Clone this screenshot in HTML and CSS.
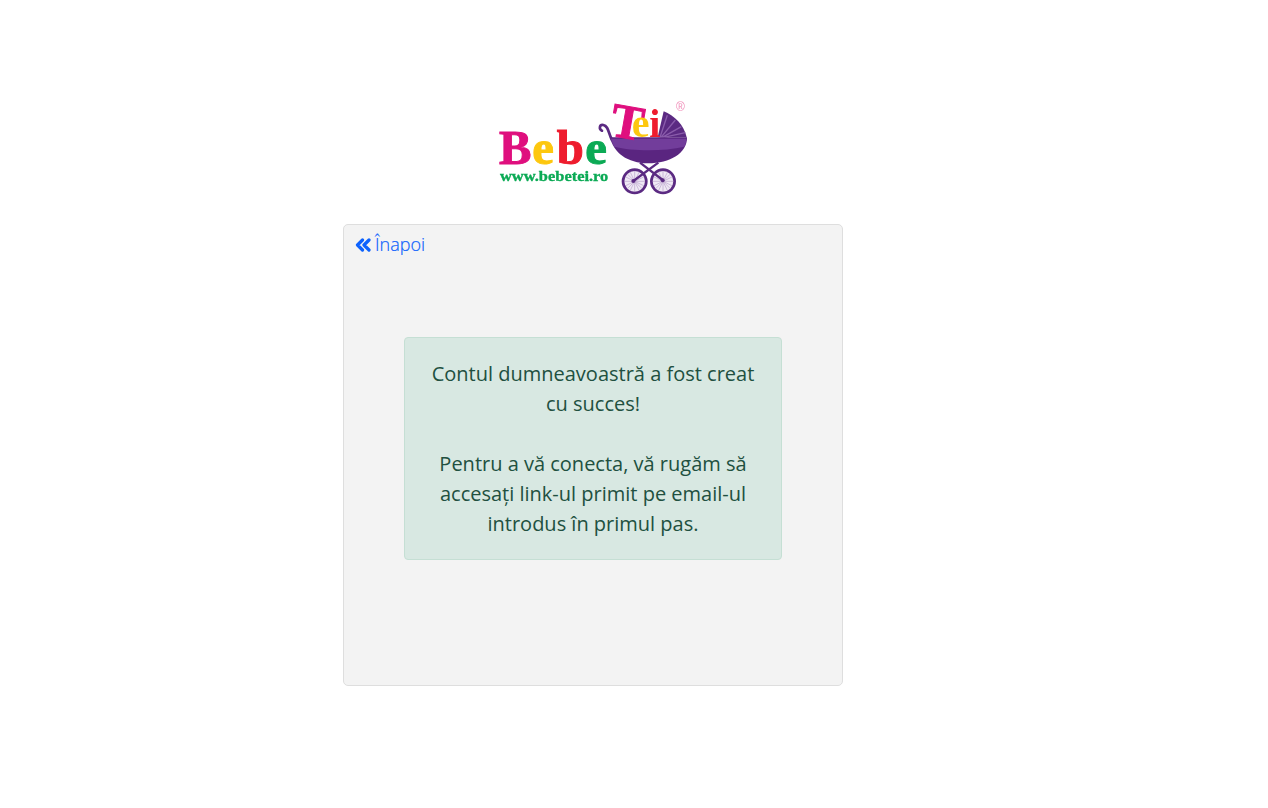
FILE: index.html
```html
<!DOCTYPE html>
<html lang="ro">
<head>
    <meta charset="UTF-8">
    <meta name="viewport" content="width=device-width, initial-scale=1.0">
    <link rel="stylesheet" href="styles.css">
    <title>Bebe Tei</title>
</head>
<body>
    <main class="page">
        <div class="logo">
            <svg class="logo-img" viewBox="-6 0 630 345" width="210" height="115" role="img" aria-label="Bebe Tei">
                <!-- wheels -->
                <circle cx="434" cy="274" r="35" fill="#efe9f4"/>
                <circle cx="519" cy="274" r="35" fill="#efe9f4"/>
                <g fill="none" stroke="#5b2a82">
                    <g stroke="#b9a2cc" stroke-width="2">
                        <path d="M434 242v64M402 274h64M412 252l44 44M456 252l-44 44M420 245l28 58M448 245l-28 58M405 260l58 28M463 260l-58 28"/>
                        <path d="M519 242v64M487 274h64M497 252l44 44M541 252l-44 44M505 245l28 58M533 245l-28 58M490 260l58 28M548 260l-58 28"/>
                    </g>
                    <circle cx="434" cy="274" r="35" stroke-width="8"/>
                    <circle cx="519" cy="274" r="35" stroke-width="8"/>
                    <path d="M450 218l68 52M505 218l-75 55" stroke-width="7"/>
                </g>
                <circle cx="430" cy="273" r="6" fill="#5b2a82"/>
                <circle cx="518" cy="271" r="6" fill="#5b2a82"/>
                <!-- hood -->
                <path d="M503 142L521 64C552 76 582 104 590 142Z" fill="#5b2a82"/>
                <path d="M510 142L532 76M513 142L556 90M517 142L574 110M521 142L586 128" stroke="#8a5cab" stroke-width="4" fill="none"/>
                <!-- handle -->
                <path d="M366 150C355 130 356 108 340 105C328 103 326 118 336 122" fill="none" stroke="#5b2a82" stroke-width="8" stroke-linecap="round"/>
                <!-- bowl -->
                <path d="M360 142H591C592 190 540 220 474 220C412 220 370 188 360 142Z" fill="#5a2580"/>
                <path d="M363 146H589C589 155 587 162 583 170C520 184 430 184 373 170C368 160 365 152 363 146Z" fill="#723d9b"/>
                <!-- lettering -->
                <text class="tei" transform="translate(356 136) rotate(10)" fill="#df0f7e" stroke="#df0f7e">T</text>
                <text class="tei-small" x="425" y="140" fill="#fdc70f">e</text>
                <text class="tei-small" x="478" y="140" fill="#ee1c2e">i</text>
                <text class="bebe" x="27" y="222" fill="#df0f7e" stroke="#df0f7e">B</text>
                <text class="bebe" x="127" y="222" fill="#fdc70f" stroke="#fdc70f">e</text>
                <text class="bebe" x="200" y="222" fill="#ee1c2e" stroke="#ee1c2e">b</text>
                <text class="bebe" x="286" y="222" fill="#0baa55" stroke="#0baa55">e</text>
                <text class="url" x="30" y="272" textLength="325" lengthAdjust="spacingAndGlyphs" fill="#0baa55" stroke="#0baa55">www.bebetei.ro</text>
                <text class="reg" x="558" y="62" fill="#f08cb8">®</text>
            </svg>
        </div>

        <section class="card">
            <a class="back" href="#">
                <svg class="back-icon" viewBox="0 0 16 14" width="16" height="14" aria-hidden="true">
                    <path d="M7.500 2L2.500 7l5 5M14 2L9 7l5 5" fill="none" stroke="currentColor" stroke-width="3.200" stroke-linecap="round" stroke-linejoin="round"/>
                </svg>
                Înapoi
            </a>
            <div class="card-body">
                <div class="alert">
                    Contul dumneavoastră a fost creat cu succes!<br><br>
                    Pentru a vă conecta, vă rugăm să accesați link-ul primit pe email-ul introdus în primul pas.
                </div>
            </div>
        </section>
    </main>
</body>
</html>
```

FILE: styles.css
```css
body {
    margin: 0;
    background-color: #ffffff;
    font-family: "Open Sans", sans-serif;
}

.page {
    width: 500px;
    margin-left: 343px;
    padding-top: 90px;
}

.logo {
    display: flex;
    justify-content: center;
    margin-bottom: 19px;
}

.logo-img {
    display: block;
    filter: blur(0.4px);
}

.tei {
    font-family: "Liberation Serif", serif;
    font-weight: bold;
    font-size: 146px;
    stroke-width: 3px;
}

.tei-small {
    font-family: "Liberation Serif", serif;
    font-weight: bold;
    font-size: 120px;
}

.bebe {
    font-family: "Liberation Serif", serif;
    font-weight: bold;
    font-size: 146px;
    stroke-width: 3px;
}

.url {
    font-family: "Liberation Serif", serif;
    font-weight: bold;
    font-size: 46px;
    stroke-width: 1px;
}

.reg {
    font-family: "Liberation Sans", sans-serif;
    font-size: 36px;
}

.card {
    display: flex;
    flex-direction: column;
    box-sizing: border-box;
    height: 462px;
    padding: 6px 11px;
    background-color: #f3f3f3;
    border: 1px solid #dedede;
    border-radius: 5px;
}

.back {
    display: flex;
    align-items: center;
    align-self: flex-start;
    gap: 4px;
    color: #0d62fd;
    font-size: 18px;
    font-weight: 300;
    -webkit-text-stroke: 0.2px #0d62fd;
    line-height: 27px;
    text-decoration: none;
}

.card-body {
    flex: 1;
    display: flex;
    align-items: center;
    justify-content: center;
    padding-bottom: 41px;
}

.alert {
    box-sizing: border-box;
    width: 378px;
    padding: 21px 20px 20px;
    background-color: #d8e8e2;
    border: 1px solid #c5dfd4;
    border-radius: 4px;
    color: #215040;
    font-size: 20px;
    line-height: 30px;
    text-align: center;
}
```
